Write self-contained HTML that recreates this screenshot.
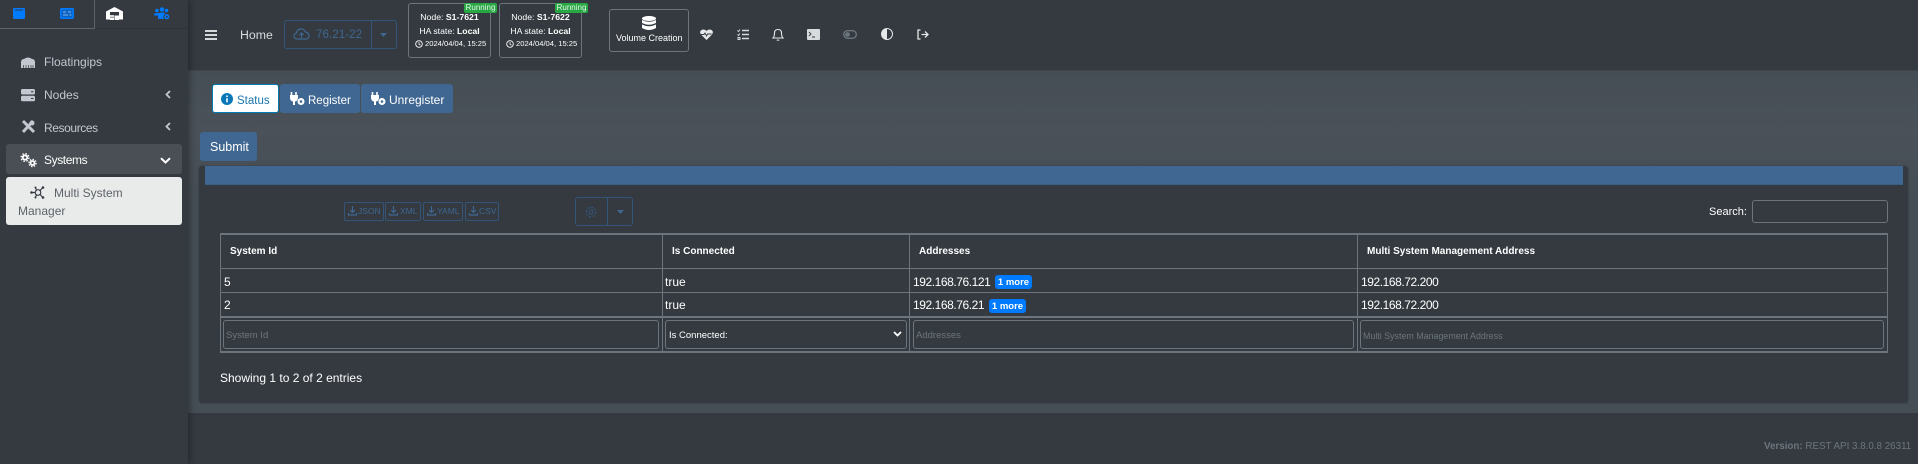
<!DOCTYPE html>
<html><head><meta charset="utf-8">
<style>
*{box-sizing:border-box}
html,body{margin:0;padding:0;width:1918px;height:464px;overflow:hidden;background:#343a40;font-family:"Liberation Sans",sans-serif;color:#fff}
.a{position:absolute}
.t{position:absolute;white-space:nowrap}
svg{position:absolute;overflow:visible}
.nav{color:#c2c7d0;font-size:12px;line-height:16px}
.b{position:absolute;border-radius:3px;background:#3f6791;color:#fff;font-size:12.5px;text-align:center}
.dl{position:absolute;top:202px;height:19px;border:1px solid #34557a;border-radius:2px}
.dt{position:absolute;top:205px;color:#3f6791;font-size:8.500px;line-height:13px;white-space:nowrap}
.ln{position:absolute;background:#6c757d}
.th{position:absolute;top:246px;font-size:10px;font-weight:bold;line-height:12px;white-space:nowrap}
.td{position:absolute;font-size:12px;line-height:14px;white-space:nowrap}
.ip{letter-spacing:-.43px}
.in{position:absolute;top:320px;height:29px;border:1px solid #6c757d;border-radius:3px;color:#6c757d;font-size:9.500px;line-height:30px;padding-left:2px;white-space:nowrap}
.badge{position:absolute;height:14px;width:37px;background:#007bff;border-radius:3px;font-size:9.500px;font-weight:bold;line-height:15px;text-align:center}
.node{position:absolute;top:3px;width:83px;height:55px;border:1px solid #6c757d;border-radius:3px;text-align:center;white-space:nowrap;font-size:8.700px}
.node div{position:absolute;left:0;right:0;line-height:12px}
.run{position:absolute;top:3px;height:10px;width:33px;background:#28a745;border-radius:2px;font-size:8px;line-height:10px;text-align:center;color:#e8f5e9}
</style></head>
<body>
<div class="a" style="left:188px;top:71px;width:1730px;height:342px;background:linear-gradient(180deg,#454d55 0,#4a5159 60px,#454d55 130px)"></div>
<div class="a" style="left:188px;top:70px;width:1730px;height:1px;background:#3e454c"></div>
<div class="a" style="left:0;top:0;width:188px;height:464px;background:#343a40;box-shadow:2px 0 6px rgba(0,0,0,.3)"></div>

<!-- sidebar tabs -->
<div class="a" style="left:0;top:28px;width:95px;height:1px;background:#5b636b"></div>
<div class="a" style="left:94px;top:0;width:1px;height:29px;background:#5b636b"></div>
<div class="a" style="left:95px;top:28px;width:93px;height:1px;background:#2f343a"></div>
<svg style="left:13px;top:8px" width="12" height="11"><rect width="12" height="11" rx="1.500" fill="#007bff"/><rect x="2" y="1.500" width="8" height="1" fill="#343a40"/></svg>
<svg style="left:60px;top:8px" width="14" height="11"><rect x=".75" y=".75" width="12.500" height="9.500" rx="1" fill="#0a62c4" stroke="#007bff" stroke-width="1.500"/><path d="M3 4h3M3 7h5M8 4h3M9.500 7h2" stroke="#8ab8ea" stroke-width="1"/></svg>
<svg style="left:106px;top:7px" width="17" height="13"><path d="M0 12.500V4.500L8.500 0 17 4.500v8z" fill="#fff"/><rect x="4" y="5" width="9" height="8" fill="#343a40"/><rect x="4" y="8" width="4" height="2" fill="#ddd"/><rect x="4" y="10.500" width="4" height="2.500" fill="#fff"/><rect x="8.500" y="8.500" width="4.500" height="4.500" fill="#fff"/></svg>
<svg style="left:154px;top:7px" width="16" height="13" fill="#007bff"><circle cx="3" cy="3.500" r="1.800"/><circle cx="8" cy="2.500" r="2.200"/><circle cx="12.500" cy="3.500" r="1.700"/><path d="M0 8.500q0-2.500 3-2.500t2 2.500zM4 12V8q0-2.500 4-2.500t4 2.500v4z"/><circle cx="12.800" cy="9.800" r="3" fill="#007bff" stroke="#343a40" stroke-width="1"/><circle cx="12.800" cy="9.800" r="1" fill="#343a40"/></svg>

<!-- sidebar nav -->
<svg style="left:21px;top:57px" width="14" height="11"><path d="M0 11V5.500Q0 2 3 2 7-1 11 2q3 0 3 3.500V11z" fill="#c2c7d0"/><path d="M2.500 8v3M5 8v3M7.500 8v3M10 8v3M12 8v3" stroke="#343a40" stroke-width=".7"/></svg>
<span class="t nav" style="left:44px;top:54px">Floatingips</span>
<svg style="left:21px;top:89px" width="14" height="12"><rect width="14" height="5.500" rx="1.500" fill="#c2c7d0"/><rect y="6.800" width="14" height="5.500" rx="1.500" fill="#c2c7d0"/><path d="M10 2.700h2.500M10 9.500h2.500" stroke="#343a40"/></svg>
<span class="t nav" style="left:44px;top:87px">Nodes</span>
<svg style="left:165px;top:90px" width="6" height="9"><path d="M5 1 1.500 4.500 5 8" fill="none" stroke="#c2c7d0" stroke-width="1.800"/></svg>
<svg style="left:21px;top:120px" width="14" height="14"><path d="M2 1 13 12M12 1 2 12" stroke="#c2c7d0" stroke-width="3"/><circle cx="11" cy="3" r="2.500" fill="#c2c7d0"/></svg>
<span class="t nav" style="left:44px;top:120px;letter-spacing:-.4px">Resources</span>
<svg style="left:165px;top:122px" width="6" height="9"><path d="M5 1 1.500 4.500 5 8" fill="none" stroke="#c2c7d0" stroke-width="1.800"/></svg>
<div class="a" style="left:6px;top:144px;width:176px;height:30px;background:#494f55;border-radius:3px"></div>
<svg style="left:20px;top:153px" width="17" height="14" fill="none" stroke="#fff"><circle cx="5" cy="4.500" r="2.200" stroke-width="1.800"/><circle cx="5" cy="4.500" r="3.900" stroke-width="1.300" stroke-dasharray="1.600 1.500"/><circle cx="12.500" cy="10" r="2" stroke-width="1.800"/><circle cx="12.500" cy="10" r="3.600" stroke-width="1.300" stroke-dasharray="1.500 1.300"/></svg>
<span class="t" style="left:44px;top:152px;font-size:12px;line-height:16px;color:#fff;letter-spacing:-.4px">Systems</span>
<svg style="left:160px;top:157px" width="11" height="7"><path d="M1 1.200 5.500 5.500 10 1.200" fill="none" stroke="#fff" stroke-width="2"/></svg>
<div class="a" style="left:6px;top:177px;width:176px;height:48px;background:#e9ebeb;border-radius:3px"></div>
<svg style="left:30px;top:186px" width="16" height="13"><g fill="none" stroke="#343a40" stroke-width="1.200"><circle cx="8" cy="6.500" r="2.800"/><path d="M5.500 6.500H2M10 4.500 12.500 2M10 8.500l2.500 2.500M6.500 4 5.500 2M6.500 9l-1 2"/></g><g fill="#343a40"><circle cx="1.500" cy="6.500" r="1.300"/><circle cx="13" cy="1.500" r="1.300"/><circle cx="13" cy="11.500" r="1.300"/><circle cx="5.500" cy="1.500" r="1"/><circle cx="5.500" cy="11.500" r="1"/></g></svg>
<span class="t" style="left:54px;top:185px;font-size:12px;line-height:16px;color:#5d6369">Multi System</span>
<span class="t" style="left:18px;top:203px;font-size:12px;line-height:16px;color:#5d6369">Manager</span>

<!-- header -->
<div class="a" style="left:205px;top:30px;width:12px;height:2px;background:#d5d8da;box-shadow:0 4px 0 #d5d8da,0 8px 0 #d5d8da"></div>
<span class="t" style="left:240px;top:27px;font-size:12.300px;line-height:16px;color:#d8dbde">Home</span>
<div class="a" style="left:284px;top:20px;width:113px;height:29px;border:1px solid #34557a;border-radius:3px"></div>
<div class="a" style="left:371px;top:20px;width:1px;height:29px;background:#34557a"></div>
<svg style="left:294px;top:28px" width="15" height="12"><path d="M3.500 11Q0 11 0 8q0-2.500 2.500-3Q3 1 7 1q3.500 0 4.500 3Q15 4.500 15 8q0 3-3.500 3z" fill="none" stroke="#3f6791" stroke-width="1.200"/><path d="M7.500 10V5M5.500 7l2-2 2 2" fill="none" stroke="#3f6791" stroke-width="1.200"/></svg>
<span class="t" style="left:316px;top:27px;font-size:11.700px;line-height:16px;color:#3f6791">76.21-22</span>
<svg style="left:380px;top:33px" width="7" height="4"><path d="M0 0h7L3.500 4z" fill="#3f6791"/></svg>

<div class="node" style="left:408px"><div style="top:7px">Node: <b>S1-7621</b></div><div style="top:21px">HA state: <b>Local</b></div><div style="top:34px;font-size:7.600px;left:16px;text-align:left">2024/04/04, 15:25</div></div>
<div class="run" style="left:464px">Running</div>
<svg style="left:415px;top:40px" width="8" height="8"><circle cx="4" cy="4" r="3.300" fill="none" stroke="#fff" stroke-width=".9"/><path d="M4 2v2.300l1.500.8" fill="none" stroke="#fff" stroke-width=".8"/></svg>
<div class="node" style="left:499px"><div style="top:7px">Node: <b>S1-7622</b></div><div style="top:21px">HA state: <b>Local</b></div><div style="top:34px;font-size:7.600px;left:16px;text-align:left">2024/04/04, 15:25</div></div>
<div class="run" style="left:555px">Running</div>
<svg style="left:506px;top:40px" width="8" height="8"><circle cx="4" cy="4" r="3.300" fill="none" stroke="#fff" stroke-width=".9"/><path d="M4 2v2.300l1.500.8" fill="none" stroke="#fff" stroke-width=".8"/></svg>

<div class="a" style="left:609px;top:9px;width:80px;height:43px;border:1px solid #6c757d;border-radius:3px"></div>
<svg style="left:642px;top:16px" width="14" height="15" fill="#fff"><ellipse cx="7" cy="2.500" rx="7" ry="2.500"/><path d="M0 4q7 3.500 14 0v3q-7 3.500-14 0zM0 8.500q7 3.500 14 0v3.500q-7 4-14 0z"/></svg>
<span class="t" style="left:616px;top:32px;font-size:9px;line-height:12px">Volume Creation</span>

<svg style="left:700px;top:29px" width="13" height="11"><path d="M6.500 11 1 5.500Q-1 2.500 1.500 1 4.500-.5 6.500 2 8.500-.5 11.500 1 14 2.500 12 5.500z" fill="#e6e8ea"/><path d="M1 5.500h3l1-1.500 1.500 3 1-2h4" fill="none" stroke="#343a40" stroke-width=".9"/></svg>
<svg style="left:737px;top:29px" width="12" height="11" fill="none" stroke="#d7dadd"><path d="M5 1.500h7M5 5.500h7M5 9.500h7" stroke-width="1.500"/><path d="M.5 1.500 1.500 2.500 3 .5M.5 5.500 1.500 6.500 3 4.500" stroke-width="1"/><rect x="1" y="8.500" width="2" height="2" stroke-width="1"/></svg>
<svg style="left:772px;top:28px" width="12" height="13" fill="none" stroke="#e6e8ea" stroke-width="1.100"><path d="M1 10q1.500-1.500 1.500-5Q2.500 1.500 6 1.500T9.500 5q0 3.500 1.500 5z"/><path d="M4.800 11.800q1.200.8 2.400 0"/></svg>
<svg style="left:807px;top:29px" width="13" height="11"><rect width="13" height="11" rx="1" fill="#d8dbde"/><path d="M2 3 4 5 2 7M5 8h3" fill="none" stroke="#343a40" stroke-width=".9"/></svg>
<svg style="left:843px;top:30px" width="14" height="9"><rect x=".7" y=".7" width="12.600" height="7.600" rx="3.800" fill="none" stroke="#6c757d" stroke-width="1.400"/><circle cx="4.500" cy="4.500" r="2.400" fill="#6c757d"/></svg>
<svg style="left:881px;top:28px" width="12" height="12"><circle cx="6" cy="6" r="5.500" fill="#343a40" stroke="#e6e8ea"/><path d="M6 .5a5.500 5.500 0 0 0 0 11z" fill="#e6e8ea"/></svg>
<svg style="left:917px;top:29px" width="12" height="11" fill="none" stroke="#e6e8ea" stroke-width="1.300"><path d="M3.500 1H1v9h2.500M4.500 5.500H11M8 2.500l3 3-3 3"/></svg>

<!-- tabs -->
<div class="a" style="left:212px;top:84px;width:67px;height:29px;background:#fff;border:1px solid #007bb5;border-radius:3px"></div>
<svg style="left:221px;top:93px" width="12" height="12"><circle cx="6" cy="6" r="6" fill="#0a78b8"/><path d="M6 2.500v1.500M6 5.200V9.300" stroke="#fff" stroke-width="1.600"/></svg>
<span class="t" style="left:237px;top:93px;font-size:11.500px;line-height:16px;color:#1b76ad">Status</span>
<div class="b" style="left:280px;top:84px;width:80px;height:29px"></div>
<svg style="left:290px;top:92px" width="15" height="14" fill="#fff"><path d="M1.500 0v3M6 0v3" stroke="#fff" stroke-width="1.600"/><path d="M0 3h8v2.500Q8 9 5 9.500V13H3V9.500Q0 9 0 5.500z"/><circle cx="11" cy="9.500" r="3.500"/><circle cx="11" cy="9.500" r="1.300" fill="#3f6791"/></svg>
<span class="t" style="left:308px;top:93px;font-size:11.500px;line-height:16px">Register</span>
<div class="b" style="left:361px;top:84px;width:92px;height:29px"></div>
<svg style="left:371px;top:92px" width="15" height="14" fill="#fff"><path d="M1.500 0v3M6 0v3" stroke="#fff" stroke-width="1.600"/><path d="M0 3h8v2.500Q8 9 5 9.500V13H3V9.500Q0 9 0 5.500z"/><circle cx="11" cy="9.500" r="3.500"/><circle cx="11" cy="9.500" r="1.300" fill="#3f6791"/></svg>
<span class="t" style="left:389px;top:92px;font-size:12px;line-height:16px">Unregister</span>
<div class="b" style="left:200px;top:132px;width:57px;height:29px"></div>
<span class="t" style="left:210px;top:139px;font-size:12.500px;line-height:16px">Submit</span>

<!-- card -->
<div class="a" style="left:199px;top:166px;width:1709px;height:237px;background:#343a40;border-radius:3px;box-shadow:0 0 2px rgba(0,0,0,.25)"></div>
<div class="a" style="left:205px;top:166px;width:1698px;height:19px;background:#3f6791;border-bottom:1px solid #3a5f86"></div>

<!-- export buttons -->
<div class="dl" style="left:344px;width:40px"></div><span class="dt" style="left:358px">JSON</span>
<div class="dl" style="left:385px;width:36px"></div><span class="dt" style="left:400px">XML</span>
<div class="dl" style="left:423px;width:40px"></div><span class="dt" style="left:437px">YAML</span>
<div class="dl" style="left:465px;width:34px"></div><span class="dt" style="left:479px">CSV</span>
<svg style="left:348px;top:206px" width="9" height="10" fill="none" stroke="#3f6791" stroke-width="1.200"><path d="M4.500 0v6M2 4l2.500 2.500L7 4M.5 7v2h8V7"/></svg>
<svg style="left:389px;top:206px" width="9" height="10" fill="none" stroke="#3f6791" stroke-width="1.200"><path d="M4.500 0v6M2 4l2.500 2.500L7 4M.5 7v2h8V7"/></svg>
<svg style="left:427px;top:206px" width="9" height="10" fill="none" stroke="#3f6791" stroke-width="1.200"><path d="M4.500 0v6M2 4l2.500 2.500L7 4M.5 7v2h8V7"/></svg>
<svg style="left:469px;top:206px" width="9" height="10" fill="none" stroke="#3f6791" stroke-width="1.200"><path d="M4.500 0v6M2 4l2.500 2.500L7 4M.5 7v2h8V7"/></svg>

<div class="a" style="left:575px;top:197px;width:58px;height:29px;border:1px solid #34557a;border-radius:3px"></div>
<div class="a" style="left:607px;top:197px;width:1px;height:29px;background:#34557a"></div>
<svg style="left:585px;top:206px" width="12" height="12" fill="none" stroke="#34557a"><circle cx="6" cy="6" r="2"/><circle cx="6" cy="6" r="4.700" stroke-width="1.300" stroke-dasharray="2 1.700"/></svg>
<svg style="left:617px;top:210px" width="7" height="4"><path d="M0 0h7L3.500 4z" fill="#3f6791"/></svg>

<span class="t" style="left:1709px;top:205px;font-size:11px;line-height:14px">Search:</span>
<div class="a" style="left:1752px;top:200px;width:136px;height:23px;border:1px solid #6c757d;border-radius:3px"></div>

<!-- table -->
<div class="ln" style="left:220px;top:233px;width:1668px;height:2px"></div>
<div class="ln" style="left:220px;top:268px;width:1668px;height:1px"></div>
<div class="ln" style="left:220px;top:292px;width:1668px;height:1px"></div>
<div class="ln" style="left:220px;top:316px;width:1668px;height:2px"></div>
<div class="ln" style="left:220px;top:351px;width:1668px;height:2px"></div>
<div class="ln" style="left:220px;top:233px;width:1px;height:120px"></div>
<div class="ln" style="left:662px;top:233px;width:1px;height:120px"></div>
<div class="ln" style="left:909px;top:233px;width:1px;height:120px"></div>
<div class="ln" style="left:1357px;top:233px;width:1px;height:120px"></div>
<div class="ln" style="left:1887px;top:233px;width:1px;height:120px"></div>

<span class="th" style="left:230px">System Id</span>
<span class="th" style="left:672px">Is Connected</span>
<span class="th" style="left:919px">Addresses</span>
<span class="th" style="left:1367px">Multi System Management Address</span>

<span class="td" style="left:224px;top:275px">5</span>
<span class="td" style="left:665px;top:275px">true</span>
<span class="td ip" style="left:913px;top:275px">192.168.76.121</span>
<div class="badge" style="left:995px;top:275px">1 more</div>
<span class="td ip" style="left:1361px;top:275px">192.168.72.200</span>
<span class="td" style="left:224px;top:298px">2</span>
<span class="td" style="left:665px;top:298px">true</span>
<span class="td ip" style="left:913px;top:298px">192.168.76.21</span>
<div class="badge" style="left:989px;top:299px">1 more</div>
<span class="td ip" style="left:1361px;top:298px">192.168.72.200</span>

<div class="in" style="left:223px;width:436px">System Id</div>
<div class="in" style="left:665px;width:242px;color:#fff;padding-left:3px">Is Connected:</div>
<svg style="left:893px;top:331px" width="9" height="6"><path d="M1 1 4.500 4.500 8 1" fill="none" stroke="#fff" stroke-width="1.800"/></svg>
<div class="in" style="left:913px;width:441px">Addresses</div>
<div class="in" style="left:1360px;width:524px;font-size:8.900px">Multi System Management Address</div>

<span class="t" style="left:220px;top:371px;font-size:12px;line-height:14px">Showing 1 to 2 of 2 entries</span>
<span class="t" style="left:1764px;top:440px;font-size:9.800px;line-height:13px;color:#6c757d"><b>Version:</b> REST API 3.8.0.8 26311</span>
</body></html>
